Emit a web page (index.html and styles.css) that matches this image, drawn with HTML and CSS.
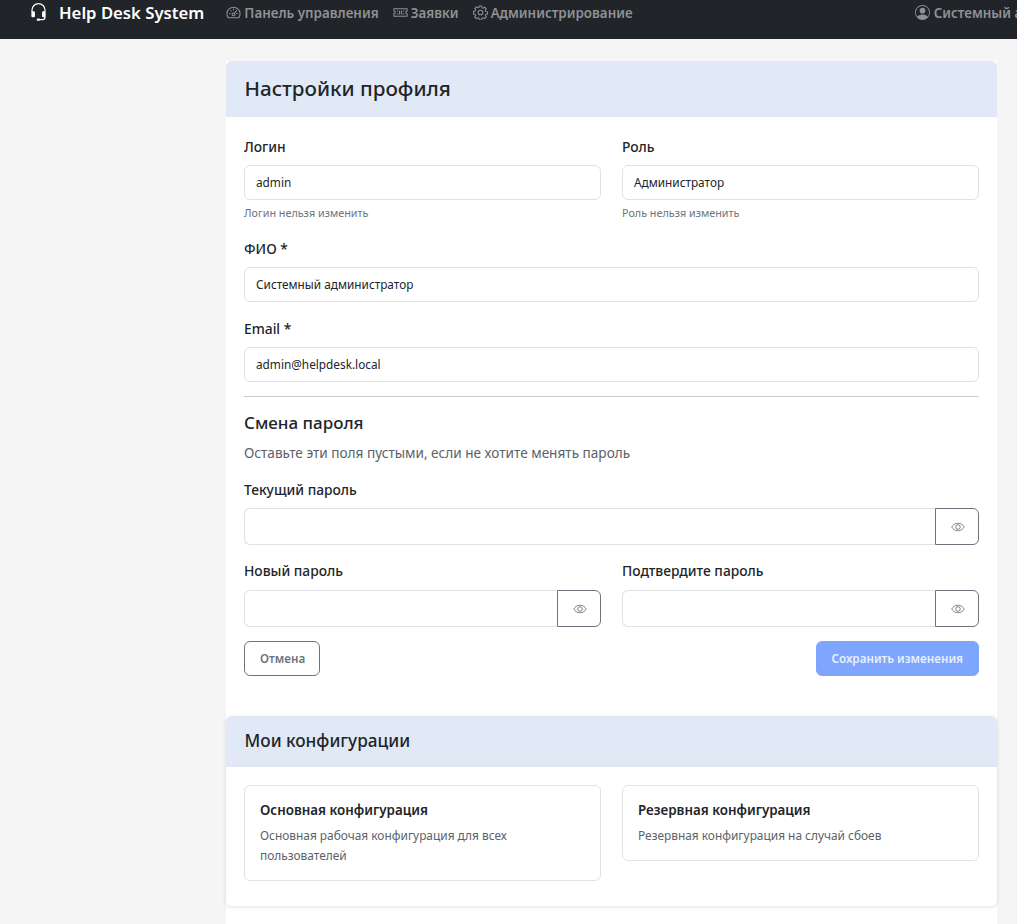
FILE: index.html
```html
<!DOCTYPE html>
<html lang="ru">
<head>
<meta charset="utf-8">
<title>Настройки профиля</title>
<link rel="stylesheet" href="styles.css">
</head>
<body>
<nav class="navbar">
  <a class="brand">
    <svg class="brand-icon" viewBox="0 0 16 16" width="19" height="19" fill="currentColor"><path d="M8 1a5 5 0 0 0-5 5v1h1a1 1 0 0 1 1 1v3a1 1 0 0 1-1 1H3a1 1 0 0 1-1-1V6a6 6 0 1 1 12 0v6a2.5 2.5 0 0 1-2.5 2.5H9.37a1 1 0 0 1-.87.5h-1a1 1 0 1 1 0-2h1a1 1 0 0 1 .87.5h2.13A1.5 1.5 0 0 0 13 12h-1a1 1 0 0 1-1-1V8a1 1 0 0 1 1-1h1V6a5 5 0 0 0-5-5z"/></svg>
    <span>Help Desk System</span>
  </a>
  <a class="nav-link">
    <svg viewBox="0 0 16 16" width="15" height="15" fill="none" stroke="currentColor" stroke-width="1.1"><path d="M2.3 13.5A7 7 0 1 1 13.7 13.5z"/><circle cx="8" cy="10" r="1.5"/><path d="M9 9l2.5-3.5M3.5 9H5M11 9h1.5M8 4v1.5M4.8 5.8l1 1"/></svg>
    <span>Панель управления</span>
  </a>
  <a class="nav-link">
    <svg viewBox="0 0 16 16" width="15" height="15" fill="none" stroke="currentColor" stroke-width="1.1"><path d="M1 4h14v2.6a1.4 1.4 0 0 0 0 2.8V12H1V9.4a1.4 1.4 0 0 0 0-2.8z"/><path d="M4 6.500h1.500M4 9.500h1.500M10.500 6.500H12M10.500 9.500H12M7 6v4M9 6v4"/></svg>
    <span>Заявки</span>
  </a>
  <a class="nav-link">
    <svg viewBox="0 0 16 16" width="15" height="15" fill="none" stroke="currentColor" stroke-width="1.1"><circle cx="8" cy="8" r="2.5"/><path d="M6.800 1h2.400l.4 1.900 1.200.5 1.600-1 1.700 1.700-1 1.600.5 1.200 1.900.4v2.400l-1.900.4-.5 1.200 1 1.600-1.700 1.700-1.600-1-1.200.5-.4 1.900H6.800l-.4-1.900-1.200-.5-1.600 1-1.700-1.700 1-1.600-.5-1.200-1.900-.4V6.800l1.900-.4.5-1.200-1-1.600 1.700-1.700 1.600 1 1.200-.5z"/></svg>
    <span>Администрирование</span>
  </a>
  <a class="nav-link user">
    <svg viewBox="0 0 16 16" width="15" height="15" fill="currentColor"><path d="M11 6a3 3 0 1 1-6 0 3 3 0 0 1 6 0z"/><path fill-rule="evenodd" d="M0 8a8 8 0 1 1 16 0A8 8 0 0 1 0 8zm8-7a7 7 0 0 0-5.470 11.370C3.240 11.230 4.850 10 8 10s4.760 1.230 5.470 2.370A7 7 0 0 0 8 1z"/></svg>
    <span>Системный администратор</span>
  </a>
</nav>

<main class="page">
  <div class="column">
    <section class="card">
      <header class="card-header large"><h1>Настройки профиля</h1></header>
      <form class="card-body first">
        <div class="row">
          <div class="field">
            <label>Логин</label>
            <div class="input">admin</div>
            <small>Логин нельзя изменить</small>
          </div>
          <div class="field">
            <label>Роль</label>
            <div class="input">Администратор</div>
            <small>Роль нельзя изменить</small>
          </div>
        </div>
        <div class="field">
          <label>ФИО *</label>
          <div class="input">Системный администратор</div>
        </div>
        <div class="field">
          <label>Email *</label>
          <div class="input">admin@helpdesk.local</div>
        </div>
        <hr class="divider">
        <h2 class="section-title">Смена пароля</h2>
        <p class="section-note">Оставьте эти поля пустыми, если не хотите менять пароль</p>
        <div class="field pw-single">
          <label>Текущий пароль</label>
          <div class="input-group">
            <div class="input tall"></div>
            <button type="button" class="eye"><svg viewBox="0 0 16 16" width="14" height="14" fill="none" stroke="currentColor" stroke-width="1"><path d="M.8 8C2.500 5.200 5 3.700 8 3.700s5.500 1.500 7.200 4.300c-1.700 2.800-4.200 4.300-7.200 4.300S2.500 10.800.8 8z"/><circle cx="8" cy="8" r="2.600"/></svg></button>
          </div>
        </div>
        <div class="row pw-row">
          <div class="field">
            <label>Новый пароль</label>
            <div class="input-group">
              <div class="input tall"></div>
              <button type="button" class="eye"><svg viewBox="0 0 16 16" width="14" height="14" fill="none" stroke="currentColor" stroke-width="1"><path d="M.8 8C2.500 5.200 5 3.700 8 3.700s5.500 1.500 7.200 4.300c-1.700 2.800-4.200 4.300-7.200 4.300S2.500 10.800.8 8z"/><circle cx="8" cy="8" r="2.600"/></svg></button>
            </div>
          </div>
          <div class="field">
            <label>Подтвердите пароль</label>
            <div class="input-group">
              <div class="input tall"></div>
              <button type="button" class="eye"><svg viewBox="0 0 16 16" width="14" height="14" fill="none" stroke="currentColor" stroke-width="1"><path d="M.8 8C2.500 5.200 5 3.700 8 3.700s5.500 1.500 7.200 4.300c-1.700 2.800-4.200 4.300-7.200 4.300S2.500 10.800.8 8z"/><circle cx="8" cy="8" r="2.600"/></svg></button>
            </div>
          </div>
        </div>
        <div class="actions">
          <button type="button" class="btn btn-outline">Отмена</button>
          <button type="button" class="btn btn-primary">Сохранить изменения</button>
        </div>
      </form>
    </section>

    <section class="card second">
      <header class="card-header"><h2>Мои конфигурации</h2></header>
      <div class="card-body configs">
        <article class="config">
          <h3>Основная конфигурация</h3>
          <p>Основная рабочая конфигурация для всех пользователей</p>
        </article>
        <article class="config">
          <h3>Резервная конфигурация</h3>
          <p>Резервная конфигурация на случай сбоев</p>
        </article>
      </div>
    </section>
  </div>
</main>
</body>
</html>
```

FILE: styles.css
```css
* { box-sizing: border-box; }
html, body { margin: 0; }
body {
  height: 924px;
  overflow: hidden;
  background: #f5f5f5;
  color: #212529;
  font-family: "Noto Sans", "Open Sans", sans-serif;
  font-size: 12px;
}
.navbar {
  height: 39px;
  background: #212529;
  display: flex;
  align-items: flex-start;
  padding-left: 29px;
  white-space: nowrap;
  overflow: hidden;
}
.brand {
  display: flex;
  align-items: center;
  gap: 11px;
  color: #fff;
  font-size: 16.7px;
  font-weight: 600;
  height: 24px;
  margin-right: 22px;
}
.brand-icon { flex: none; }
.nav-link {
  display: flex;
  align-items: center;
  gap: 3px;
  height: 25px;
  flex: none;
  margin-right: 14px;
  color: #8f9193;
  font-size: 13.4px;
  font-weight: 600;
}
.nav-link.user { margin-left: 268px; margin-right: 0; gap: 4px; }
.page { display: flex; padding-left: 226px; }
.column {
  width: 771px;
  height: 885px;
  padding-top: 22px;
  background: linear-gradient(#f5f5f5 22px, #fff 22px);
}
.card { background: #fff; border-radius: 6px; }
.card.second { margin-top: 25px; box-shadow: 0 1px 4px rgba(0,0,0,.12); }
.card-header {
  background: #e2e9f6;
  border-bottom: 1px solid #dfe4ee;
  border-radius: 6px 6px 0 0;
  padding: 0 18.500px 2px;
  display: flex;
  align-items: center;
  height: 51px;
}
.card-header.large { height: 56px; }
.card-header h1 { margin: 0; font-size: 20.6px; font-weight: 500; }
.card-header h2 { margin: 0; font-size: 17.2px; font-weight: 500; }
.card-body { padding: 18px; }
.card-body.first { padding: 19px 18px 15px; }
.row { display: grid; grid-template-columns: 1fr 1fr; column-gap: 21px; }
.field { margin-bottom: 16px; }
label { display: block; font-size: 13.8px; font-weight: 500; line-height: 22px; height: 22px; margin-bottom: 7px; }
.input {
  height: 35px;
  border: 1px solid #dee2e6;
  border-radius: 6px;
  padding: 0 11px 2px;
  display: flex;
  align-items: center;
  font-size: 11.8px;
  background: #fff;
}
.input.tall { height: 37px; flex: 1; border-radius: 6px 0 0 6px; border-right: 0; }
small { display: block; font-size: 10.8px; color: #6c757d; line-height: 16px; margin-top: 5px; margin-bottom: 1px; }
.divider { border: 0; border-top: 1px solid #c9cbce; margin: -2px 0 14px; }
.section-title { margin: 0; font-size: 17px; font-weight: 500; line-height: 24px; }
.section-note { margin: 9px 0 17px; font-size: 13.6px; color: #5a6269; line-height: 18px; }
.pw-single { margin-bottom: 15px; }
.pw-row .field { margin-bottom: 14px; }
.pw-row .input-group { margin-top: 8px; }
.input-group { display: flex; }
.eye {
  width: 44px;
  height: 37px;
  border: 1px solid #6c757d;
  border-radius: 0 6px 6px 0;
  background: #fff;
  color: #6c757d;
  padding: 0 0 0 1px;
  display: flex;
  align-items: center;
  justify-content: center;
}
.actions { display: flex; justify-content: space-between; }
.btn {
  height: 35px;
  border-radius: 6px;
  font-family: inherit;
  font-size: 11.7px;
  font-weight: 600;
  padding: 0 15px 2px;
}
.btn-outline { background: #fff; border: 1px solid #6c757d; color: #6c757d; padding-right: 14px; }
.btn-primary { background: #7ea6ff; border: 1px solid #7ea6ff; color: #e9effb; padding-left: 14px; }
.configs { display: grid; grid-template-columns: 1fr 1fr; column-gap: 21px; align-items: start; padding-bottom: 25px; }
.config {
  border: 1px solid #dfe2e6;
  border-radius: 6px;
  padding: 14px 15px 15px;
}
.config h3 { margin: 0 0 5px; font-size: 13.4px; font-weight: 600; line-height: 20px; }
.config p { margin: 0; font-size: 11.9px; line-height: 20px; color: #5a6269; }
```
